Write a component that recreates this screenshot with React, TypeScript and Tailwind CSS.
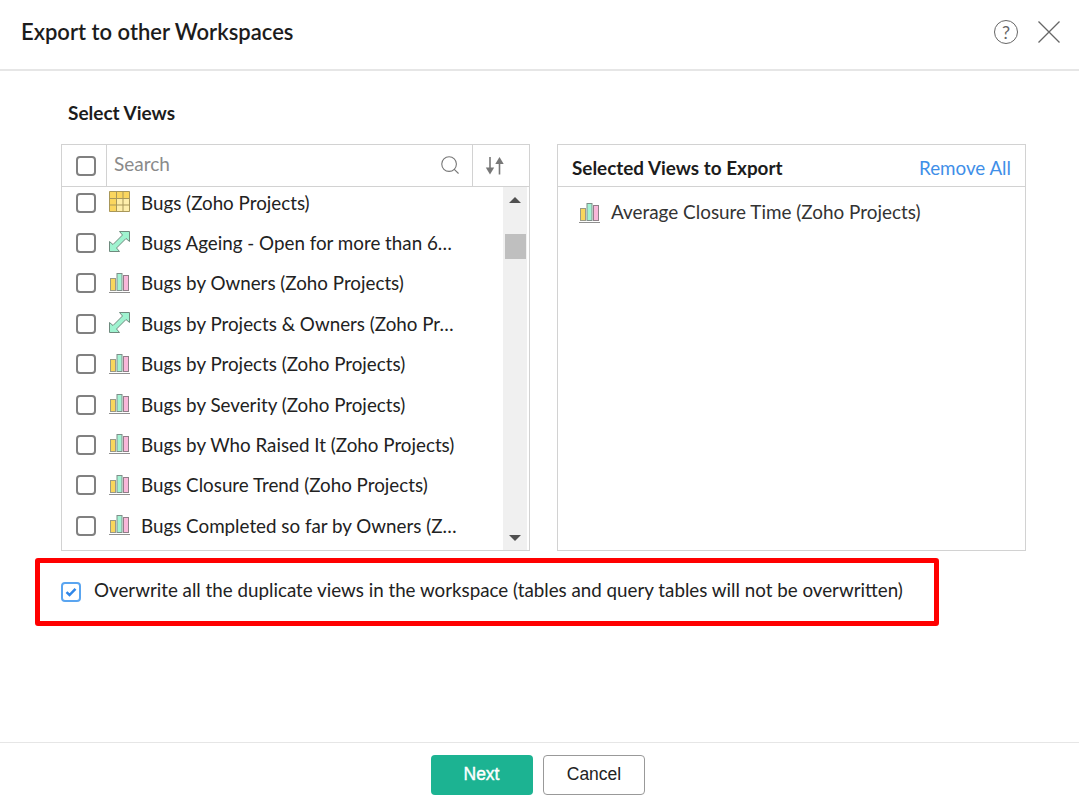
import { Search } from "lucide-react";

type ViewKind = "table" | "arrow" | "bars";

const views: { name: string; kind: ViewKind }[] = [
  { name: "Bugs (Zoho Projects)", kind: "table" },
  { name: "Bugs Ageing - Open for more than 6…", kind: "arrow" },
  { name: "Bugs by Owners (Zoho Projects)", kind: "bars" },
  { name: "Bugs by Projects & Owners (Zoho Pr…", kind: "arrow" },
  { name: "Bugs by Projects (Zoho Projects)", kind: "bars" },
  { name: "Bugs by Severity (Zoho Projects)", kind: "bars" },
  { name: "Bugs by Who Raised It (Zoho Projects)", kind: "bars" },
  { name: "Bugs Closure Trend (Zoho Projects)", kind: "bars" },
  { name: "Bugs Completed so far by Owners (Z…", kind: "bars" },
];

function BarsIcon() {
  return (
    <svg width="21" height="21" viewBox="0 0 21 21" className="shrink-0 block">
      <rect x="1.5" y="6.5" width="5" height="12" fill="#f9d65c" stroke="#9a9a88" />
      <rect x="8" y="1.5" width="5" height="17" fill="#a3f3d3" stroke="#7f8f8a" />
      <rect x="14.5" y="3.5" width="5" height="15" fill="#f9b7da" stroke="#8f8088" />
      <path d="M0 20.5H21" stroke="#8f8f8f" />
    </svg>
  );
}

function TableIcon() {
  return (
    <svg width="21" height="21" viewBox="0 0 21 21" className="shrink-0 block">
      <rect x="0.5" y="0.5" width="20" height="20" fill="#feeeaa" />
      <rect x="0.5" y="0.5" width="20" height="7" fill="#fbd65e" />
      <rect x="0.5" y="0.5" width="7" height="20" fill="#fbd65e" />
      <path
        d="M0.5 0.5H20.5V20.5H0.5ZM7.5 0.5V20.5M14 0.5V20.5M0.5 7.5H20.5M0.5 14H20.5"
        fill="none"
        stroke="#a8975a"
      />
    </svg>
  );
}

function ArrowIcon() {
  return (
    <svg width="21" height="21" viewBox="0 0 21 21" className="shrink-0 block">
      <path
        d="M10.5 0.5H20.5V10.5L17 7.5L7.5 17L10.5 20.5H0.5V10.5L4 13.5L13.5 4Z"
        fill="#9ff3d0"
        stroke="#6f8a7e"
      />
    </svg>
  );
}

function ViewIcon({ kind }: { kind: ViewKind }) {
  if (kind === "table") return <TableIcon />;
  if (kind === "arrow") return <ArrowIcon />;
  return <BarsIcon />;
}

function Box() {
  return <span className="block w-5 h-5 shrink-0 rounded-[4px] border-2 border-[#808080] bg-white" />;
}

export default function App() {
  return (
    <div className="w-[1079px] h-[802px] flex flex-col bg-white text-[#222] font-['Lato',sans-serif] overflow-hidden">
      <header className="h-[71px] shrink-0 flex items-center justify-between pl-[21px] pr-[19px] pb-[6px] border-b-2 border-[#e6e6e6]">
        <h1 className="text-[22px] font-semibold text-[#1c1c1c]">Export to other Workspaces</h1>
        <div className="flex items-center gap-[20px]">
          <span className="w-6 h-6 rounded-full border border-[#666] flex items-center justify-center text-[18px] leading-none text-[#666]">
            ?
          </span>
          <svg width="22" height="22" viewBox="0 0 22 22">
            <path d="M0.5 0.5L21.5 21.5M21.5 0.5L0.5 21.5" stroke="#666" strokeWidth="1.3" />
          </svg>
        </div>
      </header>

      <main className="flex-1 flex flex-col">
        <h2 className="pl-[68px] pt-[31px] h-[73px] text-[19px] leading-[22px] font-bold text-[#1c1c1c] shrink-0">Select Views</h2>

        <div className="flex gap-[27px] pl-[61px] shrink-0">
          <section className="w-[469px] h-[407px] border border-[#d2d2d2] flex flex-col">
            <div className="h-[42px] shrink-0 flex items-stretch border-b border-[#d2d2d2]">
              <div className="w-[45px] flex items-center justify-center pl-[4px] border-r border-[#d2d2d2]">
                <Box />
              </div>
              <div className="flex-1 flex items-center justify-between pl-[7px] pr-[11px] border-r border-[#d2d2d2]">
                <span className="text-[19px] leading-[22px] -mt-[3px] text-[#8a8a8a]">Search</span>
                <Search size={22} strokeWidth={1.2} className="text-[#777] -mt-[2px]" />
              </div>
              <div className="w-[56px] flex items-center justify-center pr-[12px]">
                <svg width="20" height="18" viewBox="0 0 20 18">
                  <path d="M5 0V12" stroke="#777" strokeWidth="1.6" />
                  <path d="M0.8 10.5H9.2L5 17.5Z" fill="#777" />
                  <path d="M14.5 17.5V5" stroke="#777" strokeWidth="1.6" />
                  <path d="M10.3 7H18.7L14.5 0Z" fill="#777" />
                </svg>
              </div>
            </div>

            <div className="flex-1 flex min-h-0">
              <ul className="flex-1 overflow-hidden">
                <div className="-mt-[4.6px]">
                  {views.map((v) => (
                    <li key={v.name} className="h-[40.4px] flex items-center pl-[14px] whitespace-nowrap">
                      <Box />
                      <span className="ml-[13px] w-[21px] -mt-[2px]">
                        <ViewIcon kind={v.kind} />
                      </span>
                      <span className="ml-[11px] text-[18.8px] leading-[24px] text-[#222]">{v.name}</span>
                    </li>
                  ))}
                </div>
              </ul>
              <div className="w-[24px] mr-[2px] bg-[#f0f0f0] flex flex-col items-center">
                <span className="mt-[10px] w-0 h-0 border-x-[6px] border-x-transparent border-b-[6px] border-b-[#505050]" />
                <span className="mt-[31px] ml-[1px] w-[21px] h-[25px] bg-[#bfbfbf]" />
                <span className="mt-auto mb-[9px] w-0 h-0 border-x-[6px] border-x-transparent border-t-[6px] border-t-[#505050]" />
              </div>
            </div>
          </section>

          <section className="w-[469px] h-[407px] border border-[#d2d2d2] flex flex-col">
            <div className="h-[42px] shrink-0 flex items-center justify-between pl-[14px] pr-[14px] pt-[5px] border-b border-[#d2d2d2]">
              <span className="text-[18.9px] font-bold text-[#1c1c1c]">Selected Views to Export</span>
              <span className="text-[18.8px] text-[#3f8fe8]">Remove All</span>
            </div>
            <div className="flex items-center pl-[21px] pt-[13px] whitespace-nowrap">
              <BarsIcon />
              <span className="ml-[11px] text-[18.9px] leading-[24px] text-[#333]">Average Closure Time (Zoho Projects)</span>
            </div>
          </section>
        </div>

        <div className="ml-[35px] mt-[7px] w-[904px] h-[68px] shrink-0 border-[5px] border-[#ff0000] rounded-[3px] flex items-center pl-[21px]">
          <span className="w-5 h-5 shrink-0 rounded-[4px] border-2 border-[#5aa5f0] bg-white flex items-center justify-center -mt-[1px]">
            <svg width="12" height="10" viewBox="0 0 12 10">
              <path d="M1.5 5.2L4.5 8L10.5 1.8" fill="none" stroke="#2f86e8" strokeWidth="2.5" />
            </svg>
          </span>
          <span className="ml-[13px] -mt-[5px] text-[18.77px] leading-[24px] text-[#222] whitespace-nowrap">
            Overwrite all the duplicate views in the workspace (tables and query tables will not be overwritten)
          </span>
        </div>
      </main>

      <footer className="h-[60px] shrink-0 border-t border-[#e6e6e6] flex items-start justify-center gap-[10px] pt-[12px] pr-[4px] font-['Liberation_Sans',sans-serif]">
        <button className="w-[102px] h-[40px] pb-[1px] rounded-[4px] bg-[#1cb392] text-white text-[17.5px] [-webkit-text-stroke:0.4px_white]">Next</button>
        <button className="w-[102px] h-[40px] pl-[1px] pb-[1px] rounded-[4px] border border-[#999] bg-white text-[#222] text-[17.5px]">Cancel</button>
      </footer>
    </div>
  );
}
